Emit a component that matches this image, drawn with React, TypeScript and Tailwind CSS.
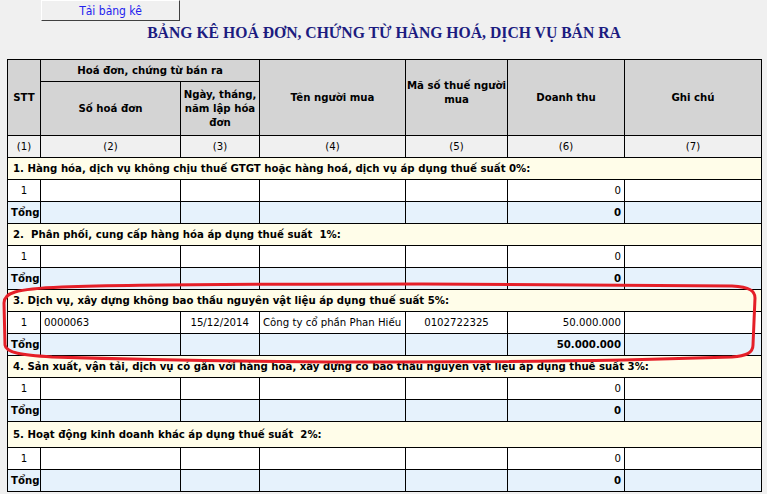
const sections = [
  { title: "1. Hàng hóa, dịch vụ không chịu thuế GTGT hoặc hàng hoá, dịch vụ áp dụng thuế suất 0%:", row: null, tall: false },
  { title: "2.  Phân phối, cung cấp hàng hóa áp dụng thuế suất  1%:", row: null, tall: false },
  {
    title: "3. Dịch vụ, xây dựng không bao thầu nguyên vật liệu áp dụng thuế suất 5%:",
    row: { so: "0000063", ngay: "15/12/2014", ten: "Công ty cổ phần Phan Hiếu", mst: "0102722325", dt: "50.000.000" },
    tall: false,
  },
  { title: "4. Sản xuất, vận tải, dịch vụ có gắn với hàng hóa, xây dựng có bao thầu nguyên vật liệu áp dụng thuế suất 3%:", row: null, tall: false },
  { title: "5. Hoạt động kinh doanh khác áp dụng thuế suất  2%:", row: null, tall: true },
];

const cell = "border border-black px-[3px] h-[22px] p-0";

export default function App() {
  return (
    <div
      className="min-h-screen w-[767px] bg-[#f0f0f0] text-[11.3px] leading-[14px] text-black"
      style={{ fontFamily: '"DejaVu Sans Condensed", "DejaVu Sans", sans-serif' }}
    >
      <div className="pl-[41px] h-[21px]">
        <button className="block w-[139px] h-[21px] bg-[#f0f0f0] border border-t-white border-l-white border-b-[#404040] border-r-[#404040] text-[12px] text-[#2222ee] leading-none">
          Tải bảng kê
        </button>
      </div>
      <div className="w-[754px] ml-[7px] h-[38px] flex justify-center pt-[3px]">
        <h1 className="font-['Liberation_Serif',serif] font-bold text-[15.7px] leading-[18px] text-[#1c1c80]">
          BẢNG KÊ HOÁ ĐƠN, CHỨNG TỪ HÀNG HOÁ, DỊCH VỤ BÁN RA
        </h1>
      </div>
      <div className="relative ml-[7px] w-[754px]">
        <table className="w-[754px] border-collapse table-fixed">
          <colgroup>
            <col className="w-[33px]" />
            <col className="w-[140px]" />
            <col className="w-[79px]" />
            <col className="w-[146px]" />
            <col className="w-[102px]" />
            <col className="w-[117px]" />
            <col className="w-[137px]" />
          </colgroup>
          <thead>
            <tr className="bg-[#d4d4d4] font-bold">
              <td rowSpan={2} className="border border-black text-center">STT</td>
              <td colSpan={2} className="border border-black text-center h-[22px]">Hoá đơn, chứng từ bán ra</td>
              <td rowSpan={2} className="border border-black text-center">Tên người mua</td>
              <td rowSpan={2} className="border border-black text-center pb-[10px]">Mã số thuế người mua</td>
              <td rowSpan={2} className="border border-black text-center">Doanh thu</td>
              <td rowSpan={2} className="border border-black text-center">Ghi chú</td>
            </tr>
            <tr className="bg-[#d4d4d4] font-bold">
              <td className="border border-black text-center h-[54px]">Số hoá đơn</td>
              <td className="border border-black text-center">Ngày, tháng, năm lập hóa đơn</td>
            </tr>
            <tr className="bg-[#f0f0f0]">
              {["(1)", "(2)", "(3)", "(4)", "(5)", "(6)", "(7)"].map((n) => (
                <td key={n} className="border border-black text-center h-[22px]">{n}</td>
              ))}
            </tr>
          </thead>
          <tbody>
            {sections.map((s) => (
              <SectionRows key={s.title} s={s} />
            ))}
          </tbody>
        </table>
        <svg className="absolute left-[-5px] top-[222px] pointer-events-none" width="760" height="84" viewBox="0 0 760 84">
          <path
            d="M60 6 C150 3 300 3 420 3 C560 3 680 4 730 5 C748 6 753 10 753 17 L751 64 C751 72 744 75 730 76 C640 79 520 81 400 81 C260 81 150 79 50 76 C20 74 4 72 3 64 L2 22 C2 12 12 8 60 6 Z"
            fill="none"
            stroke="#e51f28"
            strokeWidth="3"
          />
        </svg>
      </div>
    </div>
  );
}

type Sec = (typeof sections)[number];

function SectionRows({ s }: { s: Sec }) {
  const r = s.row;
  return (
    <>
      <tr className="bg-[#fffde9] font-bold">
        <td colSpan={7} className={`border border-black px-[5px] whitespace-pre ${s.tall ? "h-[26px]" : "h-[22px]"}`}>
          {s.title}
        </td>
      </tr>
      <tr className="bg-white">
        <td className={`${cell} text-center`}>1</td>
        <td className={cell}>{r?.so ?? ""}</td>
        <td className={`${cell} text-right pr-[10px]`}>{r?.ngay ?? ""}</td>
        <td className={cell}>{r?.ten ?? ""}</td>
        <td className={`${cell} text-center`}>{r?.mst ?? ""}</td>
        <td className={`${cell} text-right`}>{r?.dt ?? "0"}</td>
        <td className={cell}></td>
      </tr>
      <tr className="bg-[#e6f2fc] font-bold">
        <td className={`${cell} text-left px-[2px]`}>Tổng</td>
        <td className={cell}></td>
        <td className={cell}></td>
        <td className={cell}></td>
        <td className={cell}></td>
        <td className={`${cell} text-right`}>{r?.dt ?? "0"}</td>
        <td className={cell}></td>
      </tr>
    </>
  );
}
